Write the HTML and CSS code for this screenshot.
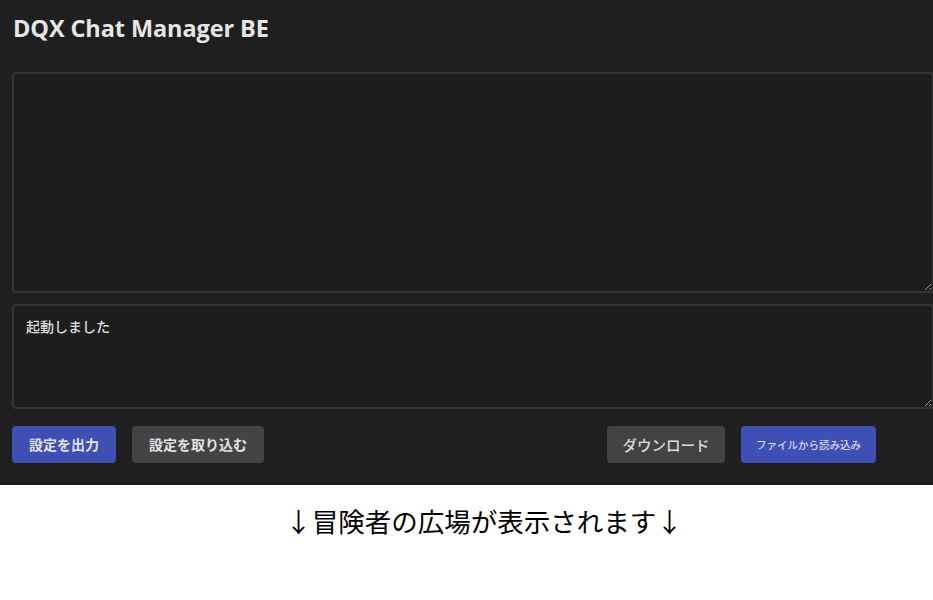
FILE: index.html
```html
<!DOCTYPE html>
<html lang="ja">
<head>
<meta charset="utf-8">
<title>DQX Chat Manager BE</title>
<link rel="stylesheet" href="styles.css">
</head>
<body>
<div class="app">
  <h1 class="title">DQX Chat Manager BE</h1>
  <textarea class="box box-main"></textarea>
  <textarea class="box box-log">起動しました</textarea>
  <div class="actions">
    <div class="group">
      <button class="btn btn-primary">設定を出力</button>
      <button class="btn btn-secondary">設定を取り込む</button>
    </div>
    <div class="group group-right">
      <button class="btn btn-secondary btn-large">ダウンロード</button>
      <button class="btn btn-primary btn-small">ファイルから読み込み</button>
    </div>
  </div>
</div>
<p class="notice">↓冒険者の広場が表示されます↓</p>
</body>
</html>
```
FILE: styles.css
```css
html, body {
  margin: 0;
  padding: 0;
  background: #ffffff;
  overflow-x: hidden;
}
body {
  font-family: "Noto Sans CJK JP", "Noto Sans", sans-serif;
}
.app {
  background: #1f1f1f;
  padding: 12px 0 22px 12px;
  display: flex;
  flex-direction: column;
}
.title {
  margin: 0 0 28px 1px;
  font-family: "Open Sans", "Noto Sans", sans-serif;
  font-weight: 700;
  font-size: 23.5px;
  line-height: 32px;
  color: #e6e6e6;
  letter-spacing: -0.1px;
}
.box {
  box-sizing: border-box;
  width: 922px;
  background: #1d1d1d;
  border: 2px solid #353535;
  border-radius: 4px;
  color: #dddddd;
  font-family: "Noto Sans CJK JP", sans-serif;
  font-size: 14px;
  font-weight: 500;
  line-height: 18px;
  padding: 11px 12px;
  margin: 0;
  outline: none;
  display: block;
}
.box-main {
  height: 221px;
  margin-bottom: 11px;
}
.box-log {
  height: 105px;
  margin-bottom: 17px;
}
.actions {
  display: flex;
  align-items: center;
  padding-right: 57px;
}
.group {
  display: flex;
  gap: 16px;
}
.group-right {
  margin-left: auto;
}
.btn {
  height: 37px;
  border: none;
  border-radius: 4px;
  font-family: "Noto Sans CJK JP", sans-serif;
  font-size: 14px;
  font-weight: 700;
  line-height: 35px;
  color: #e2e2e2;
  padding: 0 17px;
  cursor: pointer;
}
.btn-primary {
  background: #3f4fb3;
}
.btn-secondary {
  background: #434343;
}
.btn-large {
  font-size: 14.5px;
  font-weight: 500;
  padding: 0 15.5px;
  color: #dcdcdc;
}
.btn-small {
  font-size: 10.5px;
  font-weight: 500;
  padding: 0 15px;
  color: #d6d9f2;
}
.notice {
  margin: 0;
  padding: 16px 0 0 35px;
  text-align: center;
  font-family: "Noto Sans CJK JP", sans-serif;
  font-size: 26.5px;
  font-weight: 400;
  line-height: 40px;
  color: #000000;
}
```
